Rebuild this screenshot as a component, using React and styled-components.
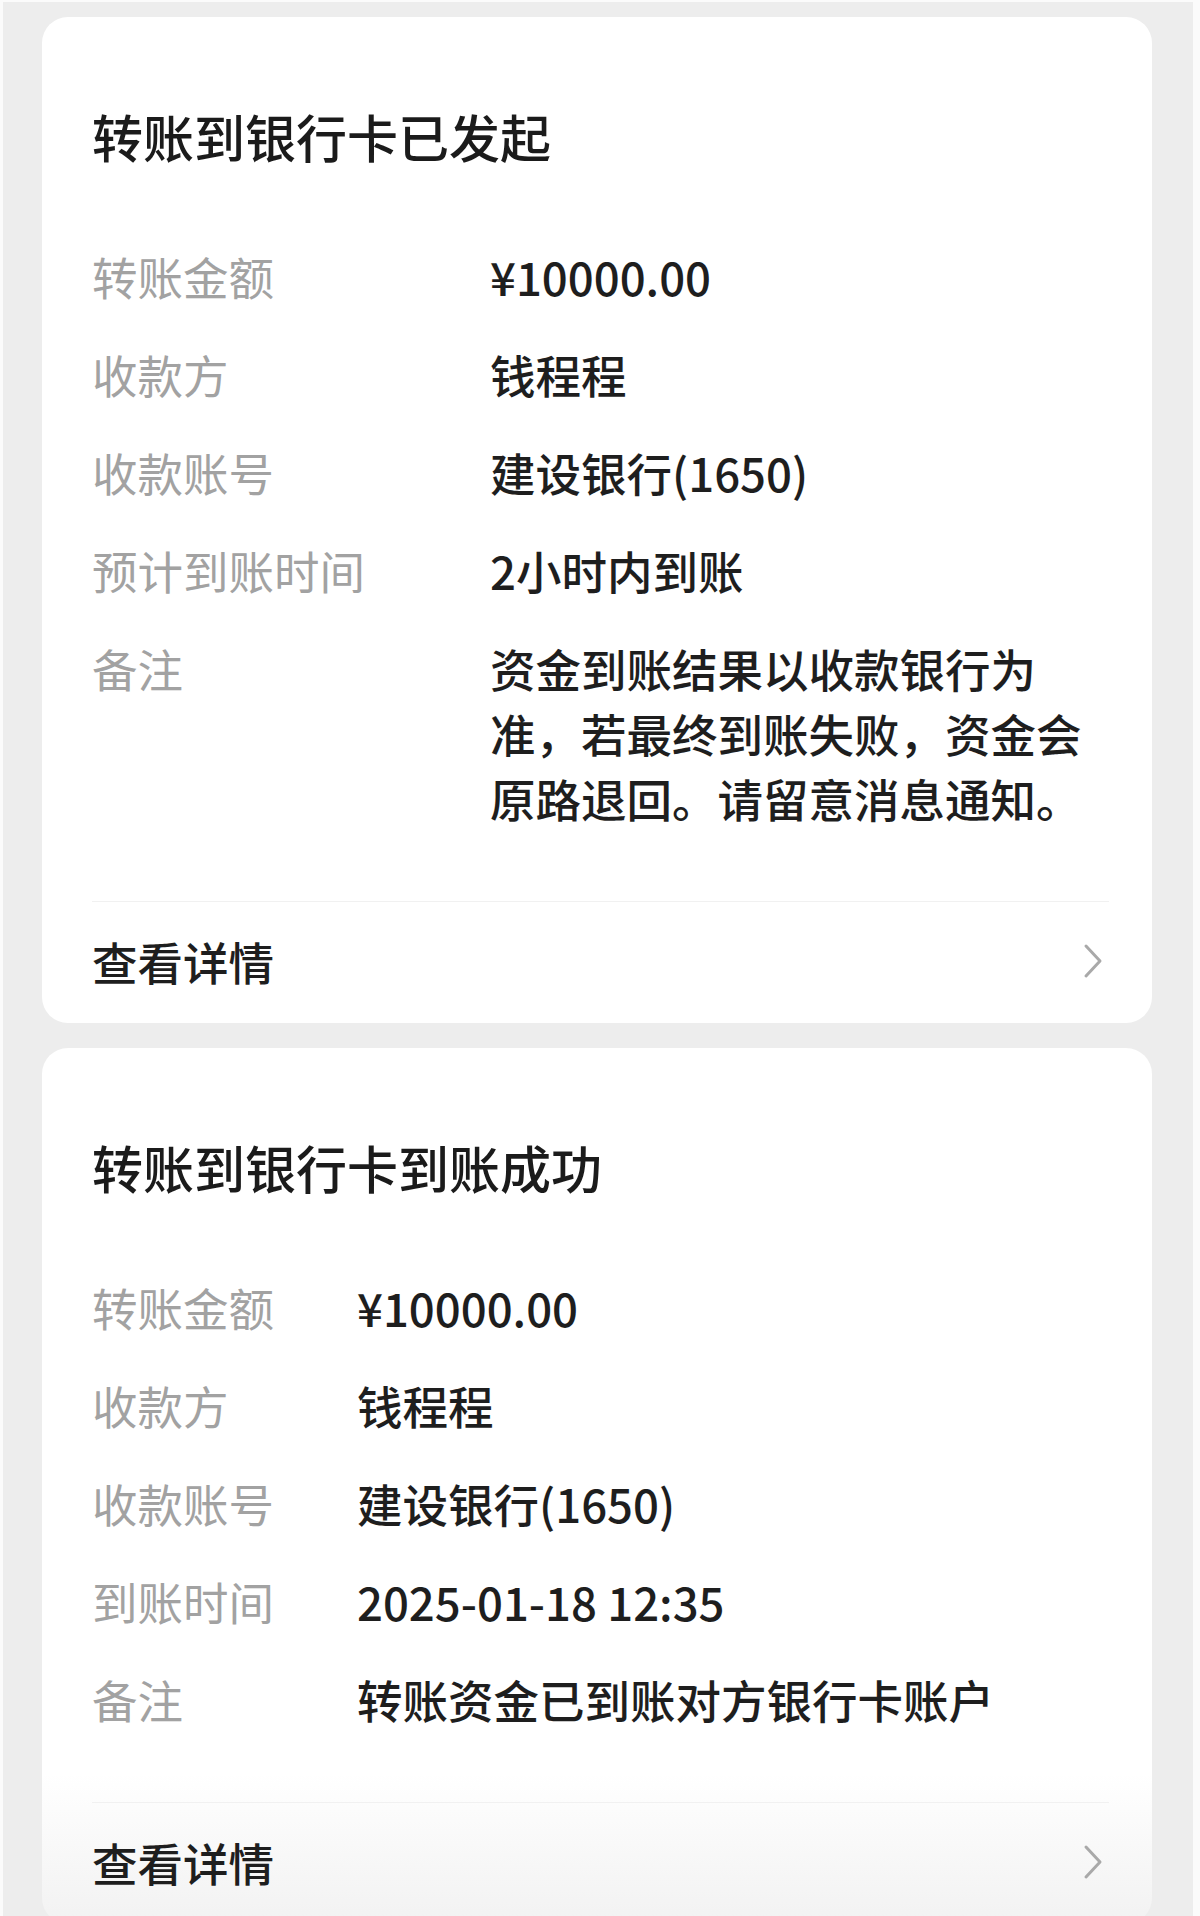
import styled, { createGlobalStyle } from 'styled-components';

const GlobalStyle = createGlobalStyle`
  html, body {
    margin: 0;
    padding: 0;
    background: #fbfbfb;
  }
  body {
    font-family: "Noto Sans CJK SC", "Noto Sans", sans-serif;
    -webkit-font-smoothing: antialiased;
  }
`;

const Page = styled.main`
  margin: 2px 7px 0 3px;
  padding-top: 15px;
  background: #ededed;
  overflow: hidden;
`;

const Card = styled.section`
  margin: 0 41px 25px 39px;
  padding: 0 43px 0 50px;
  border-radius: 26px;
  background: ${p => p.$fade
    ? 'linear-gradient(to bottom, #fff 0, #fff calc(100% - 150px), #f2f2f2 100%)'
    : '#fff'};
`;

const Title = styled.h2`
  margin: 0;
  padding-top: 84px;
  font-size: 51px;
  line-height: 70px;
  font-weight: 500;
  color: #1b1b1b;
`;

const Rows = styled.dl`
  margin: 56px 0 54px;
  padding: 0;
`;

const Row = styled.div`
  display: grid;
  grid-template-columns: ${p => p.$labelWidth}px 1fr;
  padding: 16.5px 0;
  font-size: 45.5px;
  line-height: 65px;
`;

const Label = styled.dt`
  margin: 0;
  color: #a2a2a2;
  font-weight: 400;
`;

const Value = styled.dd`
  margin: 0;
  color: #1e1e1e;
  font-weight: 500;
`;

const Divider = styled.hr`
  margin: 0;
  border: none;
  height: 1px;
  background: #f1f1f1;
`;

const Footer = styled.div`
  display: flex;
  align-items: center;
  justify-content: space-between;
  height: 118px;
  padding: 0 5px 3px 0;
  font-size: 45.5px;
  font-weight: 500;
  color: #1e1e1e;
`;

const Chevron = () => (
  <svg width="22" height="38" viewBox="0 0 22 38" fill="none">
    <path d="M4 4 L18 19 L4 34" stroke="#a9a9a9" strokeWidth="3" strokeLinecap="round" strokeLinejoin="round" />
  </svg>
);

const cards = [
  {
    title: '转账到银行卡已发起',
    labelWidth: 398,
    rows: [
      ['转账金额', '¥10000.00'],
      ['收款方', '钱程程'],
      ['收款账号', '建设银行(1650)'],
      ['预计到账时间', '2小时内到账'],
      ['备注', '资金到账结果以收款银行为准，若最终到账失败，资金会原路退回。请留意消息通知。'],
    ],
  },
  {
    title: '转账到银行卡到账成功',
    labelWidth: 265,
    fade: true,
    rows: [
      ['转账金额', '¥10000.00'],
      ['收款方', '钱程程'],
      ['收款账号', '建设银行(1650)'],
      ['到账时间', '2025-01-18 12:35'],
      ['备注', '转账资金已到账对方银行卡账户'],
    ],
  },
];

function App() {
  return (
    <>
      <GlobalStyle />
      <Page>
        {cards.map((card) => (
          <Card key={card.title} $fade={card.fade}>
            <Title>{card.title}</Title>
            <Rows>
              {card.rows.map(([label, value]) => (
                <Row key={label} $labelWidth={card.labelWidth}>
                  <Label>{label}</Label>
                  <Value>{value}</Value>
                </Row>
              ))}
            </Rows>
            <Divider />
            <Footer>
              <span>查看详情</span>
              <Chevron />
            </Footer>
          </Card>
        ))}
      </Page>
    </>
  );
}

export default App;
